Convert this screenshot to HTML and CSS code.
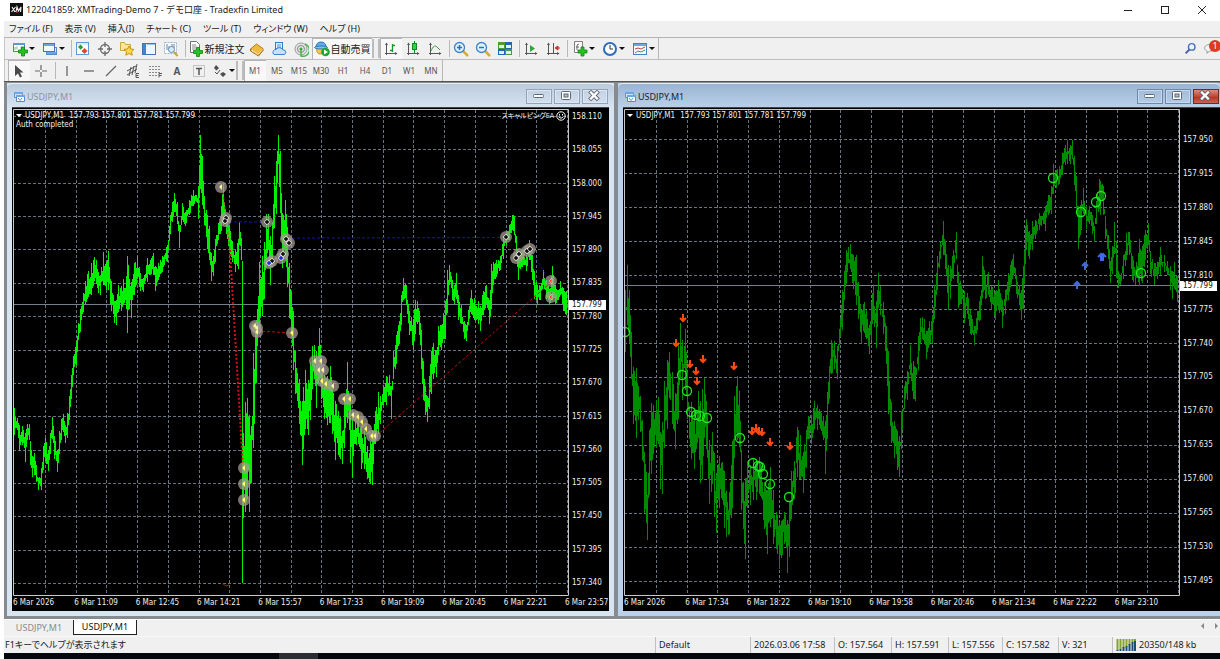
FILE: index.html
```html
<!DOCTYPE html>
<html lang="ja">
<head>
<meta charset="utf-8">
<title>122041859: XMTrading-Demo 7 - デモ口座 - Tradexfin Limited</title>
<link rel="stylesheet" href="styles.css">
</head>
<body>
<svg class="defs" aria-hidden="true">
  <defs>
    <symbol id="plus" viewBox="0 0 9 9"><path d="M3 .5h3v2.500h2.500v3H6v2.500H3V6H.5V3H3z" fill="#2cc92c" stroke="#148a14"/></symbol>
    <symbol id="i-newchart" viewBox="0 0 16 16"><rect x="1.500" y="2.500" width="11" height="8" fill="#fff" stroke="#4a83c4"/><path d="M1 2h12v2H1z" fill="#5b98d8"/><path d="M3 6v3M5 5.500v3M9 5.500v3" stroke="#8aa"/><path d="M9.500 6h3v3h3v3h-3v3h-3v-3h-3V9h3z" fill="#22c322" stroke="#128412" stroke-width=".8"/></symbol>
    <symbol id="i-profiles" viewBox="0 0 16 16"><rect x="4.500" y="6.500" width="10" height="7" fill="#dbe9f8" stroke="#5b8ac0"/><rect x="1.500" y="2.500" width="11" height="8" fill="#f2f8ff" stroke="#3f78bd"/><path d="M2 3h10v2H2zM5 11h9v2H5z" fill="#6fa5dd"/></symbol>
    <symbol id="i-market" viewBox="0 0 16 16"><rect x="1.500" y="1.500" width="12" height="12" fill="#fff" stroke="#5e9bd8"/><path d="M2 3h11" stroke="#b9d8f4"/><path d="m5.500 3.500 2.700 2.700-2.500 2.500L3 6z" fill="#2a9a34"/><path d="m9.500 7 3 3-3 3-3-3z" fill="#dd4b2c"/></symbol>
    <symbol id="i-cross" viewBox="0 0 16 16"><circle cx="8" cy="8" r="4.500" fill="none" stroke="#6b6b6b" stroke-width="1.300"/><path d="M8 1v5M8 10v5M1 8h5M10 8h5" stroke="#6b6b6b" stroke-width="1.300"/></symbol>
    <symbol id="i-folder" viewBox="0 0 16 16"><path d="M1.500 9.500v-8h4l1 2h5v6z" fill="#ffe594" stroke="#c9a544"/><path d="m10 5 1.500 3 3.500.4-2.500 2.300.7 3.500-3.200-1.700-3.200 1.700.7-3.500L5 8.400 8.500 8z" fill="#ffdb42" stroke="#c99013"/></symbol>
    <symbol id="i-panel" viewBox="0 0 16 16"><rect x="1.500" y="2.500" width="13" height="11" fill="#eef7ff" stroke="#3d77b5"/><path d="M2 3h3v10H2z" fill="#3f87cc"/><path d="M6 3.500h8" stroke="#9ac4ea"/></symbol>
    <symbol id="i-tester" viewBox="0 0 16 16"><rect x="1.500" y="1.500" width="12" height="11" fill="#f8fbff" stroke="#9ab5ce" stroke-dasharray="2 1"/><path d="M4 3v6M6 5v5M9 3v4M11 3v4" stroke="#6688a8"/><circle cx="8.500" cy="8.500" r="3" fill="#d4ecff" stroke="#6689aa"/><path d="m11 11 3.500 4" stroke="#d1a22e" stroke-width="2"/></symbol>
    <symbol id="i-order" viewBox="0 0 16 16"><path d="M2.500.5h6l3 3v8h-9z" fill="#fff" stroke="#707070"/><path d="M4 4h4M4 6h5M4 8h4" stroke="#888"/><path d="M8.500 6.500h3v3h3v3h-3v3h-3v-3h-3v-3h3z" fill="#22c322" stroke="#128412" stroke-width=".8"/></symbol>
    <symbol id="i-book" viewBox="0 0 16 16"><path d="m1.500 8 6-5 7 5-5 6z" fill="#f0b93f" stroke="#b9791d"/><path d="m3 9 6 4.500 5-5" fill="none" stroke="#fff2c8"/><path d="m1.500 8v2l8 5 5-6" fill="none" stroke="#a9690f"/></symbol>
    <symbol id="i-cloud" viewBox="0 0 16 16"><rect x="4.500" y="1.500" width="7" height="6" fill="#dff1ff" stroke="#2e7fd1"/><path d="M6 4h4M6 6h4" stroke="#3f96e6"/><path d="M3 13.500h10a2.300 2.300 0 0 0 0-4.500h-1a4 4 0 0 0-7-.5C2 8 1 12.500 3 13.500z" fill="#c6e1fa" stroke="#3c82cd"/></symbol>
    <symbol id="i-signal" viewBox="0 0 16 16"><circle cx="8" cy="8" r="6" fill="#e4e4e4" stroke="#9a9a9a"/><circle cx="8" cy="8" r="3.500" fill="none" stroke="#888"/><path d="M8 8v7a6 6 0 0 0 4-12" fill="none" stroke="#4db54f" stroke-width="1.500"/><circle cx="8" cy="8" r="1.500" fill="#38a83c"/></symbol>
    <symbol id="i-auto" viewBox="0 0 16 16"><path d="M3 6h8c0 3-2 7-5 7S2 9 3 6z" fill="#f3c94a" stroke="#b7902b"/><path d="M2 6c0-3 2-5 5-5s5 2 5 5z" fill="#5eaee8" stroke="#2f77b5"/><ellipse cx="7" cy="6.500" rx="6.500" ry="1.500" fill="#7cc3f2" stroke="#2f77b5"/><circle cx="11.500" cy="11" r="4.300" fill="#1da53a"/><path d="m10 8.500 4 2.500-4 2.500z" fill="#fff"/></symbol>
    <symbol id="axes" viewBox="0 0 16 16"><path d="M3.500 3v11M2 12.500h12" stroke="#555" fill="none"/><path d="M3.500 1.500 5 4H2zM14.500 12.500 12 11v3z" fill="#555"/></symbol>
    <symbol id="i-bars" viewBox="0 0 16 16"><use href="#axes" width="16" height="16"/><path d="M9.500 3v8M7 9.500h2.500M9.500 4.500H12" stroke="#169a25" stroke-width="1.300"/></symbol>
    <symbol id="i-candle" viewBox="0 0 16 16"><use href="#axes" width="16" height="16"/><path d="M9.500 0v12" stroke="#128a20"/><rect x="7.500" y="2.500" width="4" height="6" fill="#2fd43f" stroke="#128a20"/></symbol>
    <symbol id="i-line" viewBox="0 0 16 16"><use href="#axes" width="16" height="16"/><path d="M4 10c2-5 4-6 6-4l3 3" fill="none" stroke="#3f9a47"/></symbol>
    <symbol id="i-zoomin" viewBox="0 0 16 16"><path d="m10 10 5 5" stroke="#d9ad35" stroke-width="2.500"/><circle cx="6.500" cy="6.500" r="5" fill="#dff1ff" stroke="#3c84cc" stroke-width="1.300"/><path d="M4 6.500h5M6.500 4v5" stroke="#2e6db8" stroke-width="1.500"/></symbol>
    <symbol id="i-zoomout" viewBox="0 0 16 16"><path d="m10 10 5 5" stroke="#d9ad35" stroke-width="2.500"/><circle cx="6.500" cy="6.500" r="5" fill="#dff1ff" stroke="#3c84cc" stroke-width="1.300"/><path d="M4 6.500h5" stroke="#2e6db8" stroke-width="1.500"/></symbol>
    <symbol id="i-tile" viewBox="0 0 16 16"><path d="M1 1h7v7H1z" fill="#4d9b32"/><path d="M8 1h7v7H8z" fill="#2463b5"/><path d="M1 8h7v6H1z" fill="#2463b5"/><path d="M8 8h7v6H8z" fill="#4d9b32"/><path d="M2 4h5v3H2zM9 4h5v3H9zM2 10h5v3H2zM9 10h5v3H9z" fill="#e4f1ea"/></symbol>
    <symbol id="i-scroll" viewBox="0 0 16 16"><use href="#axes" width="16" height="16"/><path d="m7 4 5 3.500L7 11z" fill="#2aa83a"/></symbol>
    <symbol id="i-shift" viewBox="0 0 16 16"><use href="#axes" width="16" height="16"/><path d="M8.500 2v10" stroke="#555"/><path d="M15 7h-3M13 5l-3 2 3 2z" stroke="#c9352b" fill="#c9352b"/></symbol>
    <symbol id="i-indic" viewBox="0 0 16 16"><path d="M2.500.5h8v11h-8z" fill="#fff" stroke="#808080"/><path d="M5 9V5q0-2 2-2M4 6h3" fill="none" stroke="#666"/><path d="M9 6h3v3h3v3h-3v3H9v-3H6V9h3z" fill="#22c322" stroke="#128412" stroke-width=".8"/></symbol>
    <symbol id="i-clock" viewBox="0 0 16 16"><circle cx="8" cy="8" r="6" fill="#fff" stroke="#2b6dbd" stroke-width="2"/><path d="M8 4v4h3" fill="none" stroke="#333"/></symbol>
    <symbol id="i-template" viewBox="0 0 16 16"><rect x="1.500" y="2.500" width="13" height="11" fill="#f7fbff" stroke="#4683bd"/><path d="M2 3h12v2H2z" fill="#72a8d8"/><path d="m3 8 3-1 3 1 4-2" fill="none" stroke="#bb4837"/><path d="m3 12 3-2 3 1 4-2" fill="none" stroke="#3c9a4a"/></symbol>
    <symbol id="i-cursor" viewBox="0 0 16 16"><path d="M4 2v11l3-2.500 2 4 2-1-2-4h3.500z" fill="#4a4a4a"/></symbol>
    <symbol id="i-hair" viewBox="0 0 16 16"><path d="M8 2v5M8 9v5M2 8h5M9 8h5" stroke="#666" stroke-width="1.200"/></symbol>
    <symbol id="i-vline" viewBox="0 0 16 16"><path d="M8 3v10" stroke="#666" stroke-width="1.300"/></symbol>
    <symbol id="i-hline" viewBox="0 0 16 16"><path d="M3 8h10" stroke="#666" stroke-width="1.300"/></symbol>
    <symbol id="i-trend" viewBox="0 0 16 16"><path d="M3 13 13 3" stroke="#666" stroke-width="1.300"/></symbol>
    <symbol id="i-channel" viewBox="0 0 16 16"><path d="m2 8 9-5M2 12l10-6M4 13l2-9M7 12l2-9M10 10l2-9" stroke="#555"/><path d="M14 10.500h-3v4h3M11 12.500h2.500" fill="none" stroke="#555"/></symbol>
    <symbol id="i-fibo" viewBox="0 0 16 16"><path d="M2 3.500h12M2 6.500h12M2 9.500h12M2 12.500h8" stroke="#888" stroke-dasharray="2 1"/><path d="M15 10.500h-3v4M12 12.500h2.500" fill="none" stroke="#555"/></symbol>
    <symbol id="i-label" viewBox="0 0 16 16"><rect x="2.500" y="2.500" width="11" height="11" fill="none" stroke="#999" stroke-dasharray="1 1"/><path d="M5 5.500h6M8 5v7" stroke="#555" stroke-width="1.500"/></symbol>
    <symbol id="i-arrows" viewBox="0 0 16 16"><path d="m4 2 3 3-2.500 2.500L2 5zM11 9l3 2-3 3-3-3z" fill="#4d4d4d"/><path d="m3 9 2 2 3-4" fill="none" stroke="#4d4d4d"/></symbol>
    <symbol id="i-win" viewBox="0 0 12 12"><path d="M1.500 1.500h8v5h-8z" fill="#cfe4fb" stroke="#5a95d6"/><path d="M1 1h9v2H1z" fill="#6aa6e8"/><path d="M3.500 4.500h8v6h-8z" fill="#fff" stroke="#4e8bd0"/><path d="M3 4h9v2H3z" fill="#6aa6e8"/><path d="m5 7 2 2.500L9 7" fill="none" stroke="#5a95d6"/></symbol>
    <symbol id="w-min" viewBox="0 0 26 15"><rect x="7.500" y="5.500" width="10" height="3" rx="1" fill="#fff" stroke="#5d6877"/></symbol>
    <symbol id="w-max" viewBox="0 0 26 15"><rect x="7.500" y="2.500" width="9" height="8" rx="1" fill="#fff" stroke="#5d6877"/><rect x="10" y="5" width="4" height="3" fill="#a9bdd6" stroke="#5d6877"/></symbol>
    <symbol id="w-close" viewBox="0 0 26 15"><path d="m9 3.500 6 6M15 3.500l-6 6" stroke="#5d6070" stroke-width="4" stroke-linecap="square"/><path d="m9 3.500 6 6M15 3.500l-6 6" stroke="#fff" stroke-width="2.400" stroke-linecap="square"/></symbol>
  </defs>
</svg>

<header class="titlebar">
  <svg class="logo" viewBox="0 0 13 13" aria-hidden="true"><path d="M0 0h13v13H0z" fill="#111"/><path d="m2 4 3 5M5.500 4 1.500 9M6 9l1-5 1.500 4L11 4l-.5 5" fill="none" stroke="#eee" stroke-width="1.200"/><path d="M6 9h2" stroke="#d33"/></svg>
  <h1>122041859: XMTrading-Demo 7 - デモ口座 - Tradexfin Limited</h1>
  <div class="sysbuttons">
    <button aria-label="最小化"><svg viewBox="0 0 10 10"><path d="M1 5.500h8" stroke="#222"/></svg></button>
    <button aria-label="最大化"><svg viewBox="0 0 10 10"><rect x="1.500" y="1.500" width="7" height="7" fill="none" stroke="#222"/></svg></button>
    <button aria-label="閉じる"><svg viewBox="0 0 10 10"><path d="m1 1 8 8M9 1 1 9" stroke="#222"/></svg></button>
  </div>
</header>

<div class="app">
  <nav class="menu">
    <button>ファイル (F)</button><button>表示 (V)</button><button>挿入(I)</button><button>チャート (C)</button><button>ツール (T)</button><button>ウィンドウ (W)</button><button>ヘルプ (H)</button>
  </nav>

  <div class="toolrow">
    <div class="toolbar">
      <button class="drop" aria-label="新規チャート"><svg><use href="#i-newchart"/></svg></button>
      <button class="drop" aria-label="プロファイル"><svg><use href="#i-profiles"/></svg></button>
      <i class="sep"></i>
      <button aria-label="気配値"><svg><use href="#i-market"/></svg></button>
      <button aria-label="データウィンドウ"><svg><use href="#i-cross"/></svg></button>
      <button aria-label="ナビゲーター"><svg><use href="#i-folder"/></svg></button>
      <button aria-label="ターミナル"><svg><use href="#i-panel"/></svg></button>
      <button aria-label="ストラテジーテスター"><svg><use href="#i-tester"/></svg></button>
      <i class="sep"></i>
      <button class="wide"><svg><use href="#i-order"/></svg>新規注文</button>
      <button aria-label="エディター"><svg><use href="#i-book"/></svg></button>
      <button aria-label="サーバー"><svg><use href="#i-cloud"/></svg></button>
      <button aria-label="シグナル"><svg><use href="#i-signal"/></svg></button>
      <button class="wide on"><svg><use href="#i-auto"/></svg>自動売買</button>
      <i class="grip"></i>
      <button class="on" aria-label="バーチャート"><svg><use href="#i-bars"/></svg></button>
      <button aria-label="ローソク足"><svg><use href="#i-candle"/></svg></button>
      <button aria-label="ライン"><svg><use href="#i-line"/></svg></button>
      <i class="sep"></i>
      <button aria-label="拡大"><svg><use href="#i-zoomin"/></svg></button>
      <button aria-label="縮小"><svg><use href="#i-zoomout"/></svg></button>
      <button aria-label="整列"><svg><use href="#i-tile"/></svg></button>
      <i class="sep"></i>
      <button aria-label="自動スクロール"><svg><use href="#i-scroll"/></svg></button>
      <button aria-label="シフト"><svg><use href="#i-shift"/></svg></button>
      <i class="sep"></i>
      <button class="drop" aria-label="インディケータ"><svg><use href="#i-indic"/></svg></button>
      <button class="drop" aria-label="時間軸"><svg><use href="#i-clock"/></svg></button>
      <button class="drop" aria-label="定型チャート"><svg><use href="#i-template"/></svg></button>
    </div>
    <div class="right-tools">
      <button aria-label="検索"><svg viewBox="0 0 16 16"><path d="m7 9-5 5" stroke="#4a64a8" stroke-width="2.500"/><circle cx="9.500" cy="6" r="4" fill="#eef4ff" stroke="#4a6fc0" stroke-width="1.800"/></svg></button>
      <button class="chat" aria-label="通知"><svg viewBox="0 0 16 16"><path d="M3 5c3-3 9-2 10 1s-1 6-5 5l-3 3v-3C2 10 1 7 3 5z" fill="#f4f4f4" stroke="#888"/></svg><span>1</span></button>
    </div>
  </div>

  <div class="toolrow second">
    <div class="toolbar">
      <button class="on" aria-label="カーソル"><svg><use href="#i-cursor"/></svg></button>
      <button aria-label="クロスヘア"><svg><use href="#i-hair"/></svg></button>
      <i class="sep"></i>
      <button aria-label="垂直線"><svg><use href="#i-vline"/></svg></button>
      <button aria-label="水平線"><svg><use href="#i-hline"/></svg></button>
      <button aria-label="トレンドライン"><svg><use href="#i-trend"/></svg></button>
      <button aria-label="チャネル"><svg><use href="#i-channel"/></svg></button>
      <button aria-label="フィボナッチ"><svg><use href="#i-fibo"/></svg></button>
      <button class="letter">A</button>
      <button aria-label="ラベル"><svg><use href="#i-label"/></svg></button>
      <button class="drop narrow" aria-label="矢印"><svg><use href="#i-arrows"/></svg></button>
      <i class="grip"></i>
      <button class="tf on">M1</button><button class="tf">M5</button><button class="tf">M15</button><button class="tf">M30</button><button class="tf">H1</button><button class="tf">H4</button><button class="tf">D1</button><button class="tf">W1</button><button class="tf">MN</button>
    </div>
  </div>

  <main class="workspace">
    <section class="window">
      <div class="caption">
        <svg class="winicon"><use href="#i-win"/></svg><h2>USDJPY,M1</h2>
        <button aria-label="最小化"><svg><use href="#w-min"/></svg></button><button aria-label="最大化"><svg><use href="#w-max"/></svg></button><button aria-label="閉じる"><svg><use href="#w-close"/></svg></button>
      </div>
      <div class="chart">
        <div class="plot">
          <svg id="chart-a" viewBox="12 108 557 488" preserveAspectRatio="none" role="img" aria-label="USDJPY M1"></svg>
          <div class="legend"><p class="quote"><span>USDJPY,M1</span> 157.793 157.801 157.781 157.799</p><p>Auth completed</p></div>
          <div class="expert">スキャルピングEA <svg viewBox="0 0 10 10"><circle cx="5" cy="5" r="4.200" fill="none" stroke="#fff"/><path d="M3.500 3v1.500M6.500 3v1.500M2.800 6q2.200 2.500 4.400 0" fill="none" stroke="#fff"/></svg></div>
        </div>
        <div class="prices prices-a">
          <span>158.110</span><span>158.055</span><span>158.000</span><span>157.945</span><span>157.890</span><span>157.835</span><span>157.780</span><span>157.725</span><span>157.670</span><span>157.615</span><span>157.560</span><span>157.505</span><span>157.450</span><span>157.395</span><span>157.340</span>
          <b>157.799</b>
        </div>
        <div class="times"><span>6 Mar 2026</span><span>6 Mar 11:09</span><span>6 Mar 12:45</span><span>6 Mar 14:21</span><span>6 Mar 15:57</span><span>6 Mar 17:33</span><span>6 Mar 19:09</span><span>6 Mar 20:45</span><span>6 Mar 22:21</span><span>6 Mar 23:57</span></div>
      </div>
    </section>

    <section class="window active">
      <div class="caption">
        <svg class="winicon"><use href="#i-win"/></svg><h2>USDJPY,M1</h2>
        <button aria-label="最小化"><svg><use href="#w-min"/></svg></button><button aria-label="最大化"><svg><use href="#w-max"/></svg></button><button class="close" aria-label="閉じる"><svg><use href="#w-close"/></svg></button>
      </div>
      <div class="chart">
        <div class="plot">
          <svg id="chart-b" viewBox="623 108 557 488" preserveAspectRatio="none" role="img" aria-label="USDJPY M1"></svg>
          <div class="legend"><p class="quote"><span>USDJPY,M1</span> 157.793 157.801 157.781 157.799</p></div>
        </div>
        <div class="prices prices-b">
          <span>157.950</span><span>157.915</span><span>157.880</span><span>157.845</span><span>157.810</span><span>157.775</span><span>157.740</span><span>157.705</span><span>157.670</span><span>157.635</span><span>157.600</span><span>157.565</span><span>157.530</span><span>157.495</span>
          <b>157.799</b>
        </div>
        <div class="times"><span>6 Mar 2026</span><span>6 Mar 17:34</span><span>6 Mar 18:22</span><span>6 Mar 19:10</span><span>6 Mar 19:58</span><span>6 Mar 20:46</span><span>6 Mar 21:34</span><span>6 Mar 22:22</span><span>6 Mar 23:10</span></div>
      </div>
    </section>
  </main>

  <div class="tabs">
    <button>USDJPY,M1</button><button class="current">USDJPY,M1</button>
    <span class="scroll"><button aria-label="左へ"><svg viewBox="0 0 6 8"><path d="m5 1-3 3 3 3z" fill="#888"/></svg></button><button aria-label="右へ"><svg viewBox="0 0 6 8"><path d="m1 1 3 3-3 3z" fill="#888"/></svg></button></span>
  </div>

  <footer class="status">
    <span class="hint">F1キーでヘルプが表示されます</span>
    <span class="c-profile">Default</span><span class="c-date">2026.03.06 17:58</span><span class="c-ohl">O: 157.564</span><span class="c-ohl">H: 157.591</span><span class="c-l">L: 157.556</span><span class="c-c">C: 157.582</span><span class="c-v">V: 321</span>
    <span class="c-net"><svg viewBox="0 0 20 12"><path d="M1.500 0v11M4.500 0v10M7.500 0v9M10.500 0v8M13.500 0v6M16.500 0v4M19 0v3" stroke="#84a32c" stroke-width="2"/><path d="M1.500 11v1M4.500 10v2M7.500 8v4M10.500 7v5M13.500 5v7M16.500 3v9M19 2v10" stroke="#194f7c" stroke-width="2"/></svg>20350/148 kb</span>
  </footer>
</div>
<div class="taskbar"><i></i></div>
<script src="chart.js"></script>
</body>
</html>
```
FILE: styles.css
```css
* { box-sizing: border-box; }
body { margin: 0; min-height: 100vh; display: flex; flex-direction: column; background: #fff; color: #1a1a1a; font: 9px/12px "Noto Sans", "Noto Sans CJK JP", sans-serif; }
h1, h2, p { margin: 0; font: inherit; }
button { font: inherit; color: inherit; border: 0; padding: 0; background: none; display: flex; align-items: center; justify-content: center; }
svg { display: block; flex: none; }
.defs { position: absolute; width: 0; height: 0; }

.titlebar { height: 21px; display: flex; align-items: center; gap: 3px; padding: 0 0 2px 10px; }
.titlebar h1 { flex: 1; }
.logo { width: 13px; height: 13px; }
.sysbuttons { display: flex; }
.sysbuttons button { width: 37px; height: 18px; }
.sysbuttons svg { width: 10px; height: 10px; }

.app { flex: 1; margin-left: 4px; background: #f0f0f0; display: flex; flex-direction: column; }
.menu { height: 17px; display: flex; gap: 12px; padding-left: 5px; border-bottom: 1px solid #b4b4b4; font-feature-settings: "palt"; }

.toolrow { display: flex; justify-content: space-between; height: 22px; border-bottom: 1px solid #bdbdbd; }
.toolrow.second { height: 21px; border-bottom: 0; }
.toolbar { display: flex; padding-left: 3px; border-left: 1px solid #c8c8c8; border-right: 1px solid #b8b8b8; }
.toolbar button { width: 22px; }
.toolbar svg { width: 16px; height: 16px; }
.toolbar .drop { width: 30px; gap: 1px; }
.toolbar .drop.narrow { width: 26px; }
.drop::after { content: ""; border: 3px solid transparent; border-top-color: #111; border-bottom: 0; }
.toolbar .wide { width: 60px; gap: 1px; font-size: 10px; white-space: nowrap; }
.toolbar .on { background: #f8f8f8; box-shadow: inset 1px 1px #b5b5b5; }
.sep { width: 4px; border-right: 1px solid #b8b8b8; margin: 2px 0; }
.grip { width: 8px; border: solid #bcbcbc; border-width: 0 2px; margin: 1px 0; }
.tf { font-size: 8px; color: #555; }
.letter { font-weight: bold; color: #555; font-size: 10px; }
.right-tools { display: flex; align-items: center; gap: 6px; overflow: hidden; }
.right-tools svg { width: 13px; height: 13px; }
.chat { position: relative; width: 17px; height: 18px; justify-content: flex-start; }
.chat span { position: absolute; top: 0; left: 6px; width: 12px; height: 12px; border-radius: 6px; background: #dc3a22; color: #fff; text-align: center; }

.workspace { flex: 1; display: flex; gap: 4px; padding: 1px 0 3px 3px; background: #858b8e; border-top: 1px solid #555; }
.window { box-sizing: content-box; flex: 1 1 0; min-width: 0; display: flex; flex-direction: column; padding: 0 5px 5px; background: #d7e4f2; color: #8c949c; }
.window.active { padding-right: 0; background: #b9d1ea; color: #1b222b; }
.caption { height: 25px; margin: 0 -5px; padding: 1px 6px 0; display: flex; align-items: center; gap: 2px; background: linear-gradient(#bccbdc, #d7e4f2); border-top: 1px solid #e8eef5; border-radius: 5px 5px 0 0; }
.active .caption { margin-right: 0; padding-right: 1px; background: linear-gradient(#9bb4d3, #b9d1ea); }
.caption h2 { flex: 1; }
.winicon { width: 12px; height: 12px; }
.caption button { width: 26px; height: 15px; border: 1px solid #93a2b5; box-shadow: inset 0 0 0 1px #dce7f3; }
.active .caption button { border-color: #6f86a5; box-shadow: inset 0 0 0 1px #c5d8ee; }
.caption button svg { width: 26px; height: 15px; }
.active .caption .close { background: linear-gradient(#dc8c80, #c24433 50%, #b3311f 51%, #cf6350); border-color: #6b2b28; box-shadow: none; }

.chart { flex: 1; display: grid; grid-template: 1fr 15px / 1fr 40px; background: #000; color: #f0f0f0; font: 8px/10px "DejaVu Sans Condensed", "Noto Sans", "Noto Sans CJK JP", sans-serif; border-top: 1px solid #444; margin-top: -1px; }
.plot { position: relative; min-width: 0; }
.plot > svg { position: absolute; inset: 0; width: 100%; height: 100%; }
.legend { position: absolute; left: 4px; top: 3px; }
.legend p { line-height: 9px; }
.quote { display: flex; align-items: center; gap: 3px; }
.quote span { padding-right: 2px; }
.quote::before { content: ""; border: 3px solid transparent; border-top-color: #fff; border-bottom: 0; }
.expert { position: absolute; right: 3px; top: 3px; display: flex; align-items: center; gap: 2px; font-size: 7px; font-feature-settings: "palt"; }
.expert svg { width: 10px; height: 10px; }
.prices { position: relative; display: flex; flex-direction: column; justify-content: space-between; padding-left: 3px; }
.prices-a { padding-top: 4px; padding-bottom: 8px; }
.prices-b { padding-top: 27px; padding-bottom: 10px; }
.prices b { position: absolute; left: 0; width: 37px; padding-left: 3px; background: #fff; color: #111; font-weight: normal; }
.prices-a b { top: calc(39% + 2px); }
.prices-b b { top: calc(35% + 2px); }
.times { grid-column: 1 / -1; display: grid; grid-template-columns: repeat(9, 1fr) 44px; padding: 2px 0 0 1px; white-space: nowrap; }

.tabs { height: 17px; display: flex; align-items: flex-start; padding-left: 1px; color: #8a8a8a; border-top: 1px solid #fff; }
.tabs > button { height: 15px; width: 68px; }
.tabs .current { width: 64px; border: 1px solid #222; border-top: 0; background: #fff; color: #111; }
.scroll { margin-left: auto; display: flex; gap: 9px; padding-top: 2px; }
.scroll svg { width: 6px; height: 8px; }

.status { height: 17px; display: flex; white-space: nowrap; border-top: 1px solid #f8f8f8; }
.status span { padding: 2px 3px 0; border-left: 1px solid #c0c0c0; }
.status .hint { flex: 1; border: 0; padding-left: 1px; font-feature-settings: "palt"; }
.c-profile { width: 95px; }
.c-date { width: 84px; }
.c-ohl { width: 57px; }
.c-l { width: 54px; }
.c-c { width: 56px; }
.c-v { width: 54px; }
.status .c-net { width: 108px; display: flex; gap: 3px; }
.c-net svg { width: 20px; height: 12px; }

.taskbar { height: 6px; margin-left: 4px; background: #05070f; display: flex; }
.taskbar i { width: 39px; margin-left: 275px; background: #2c2d33; }

.grid { stroke: #68737e; stroke-dasharray: 3 2; fill: none; }
.frame { stroke: #c8c8c8; fill: none; }
.bid { stroke: #76808c; }
.bars { fill: none; shape-rendering: crispEdges; }
.bars-a { stroke: #00f000; }
.bars-b { stroke: #008c00; }
.halo { fill: #a39a90; fill-opacity: .75; }
.ring { fill: none; stroke: #1fe61f; stroke-width: 1.300; }
```
FILE: chart.js
```js
// Price envelopes: x, high, low for each key point of the series.
const seriesA = `14,408,435 17,418,430 19,425,452 22,425,445 25,432,462 27,424,440 29,424,440 30,440,465 32,455,478 34,452,476 36,465,482 38,478,490 41,468,491 43,445,470 45,437,462 48,450,471 50,432,455 52,416,440 54,435,460 57,450,472 59,430,455 61,418,440 63,414,432 65,425,444 67,412,438 69,395,420 71,375,400 73,355,375 76,340,365 78,322,340 80,308,332 83,292,312 85,280,305 88,270,298 91,262,296 94,256,282 96,260,284 98,272,293 100,275,295 103,251,285 106,262,290 108,250,290 111,280,312 114,300,324 116,300,326 118,285,312 121,285,312 123,278,305 126,275,310 127,255,334 128,265,310 131,280,318 134,262,295 137,255,280 140,272,292 143,278,292 147,258,282 150,260,275 153,252,275 155,265,292 158,262,280 162,256,272 167,245,262 170,215,235 172,202,222 174,192,212 177,202,225 179,225,248 182,202,220 185,212,226 189,200,216 193,190,206 196,195,202 198,185,220 200,135,190 202,155,205 204,195,225 207,215,250 209,225,260 211,252,282 213,255,276 215,238,262 218,222,240 221,205,232 223,182,225 226,215,235 229,225,252 232,240,262 235,250,272 238,238,270 239,222,246 241,238,260 242,260,410 243,430,518 245,400,512 247,395,500 249,415,516 251,425,485 253,350,450 256,320,385 259,260,335 262,255,318 264,240,300 266,213,270 268,213,250 270,235,285 272,222,260 274,175,230 276,160,215 278,134,165 280,150,215 282,210,270 285,198,255 287,225,290 289,262,320 291,290,335 293,310,370 295,350,395 297,372,402 299,378,425 302,400,466 303,385,450 305,370,430 308,380,435 310,360,420 312,345,390 314,345,380 316,350,410 319,326,380 321,360,400 324,375,420 327,375,425 330,365,425 332,385,435 335,400,460 338,410,455 340,415,460 342,430,465 344,400,450 347,360,425 350,395,465 352,415,478 355,415,445 358,420,445 361,425,470 364,430,470 367,445,480 370,440,485 372,430,485 375,410,445 378,392,435 380,395,425 383,385,405 386,375,405 389,375,395 391,385,420 393,350,380 396,335,365 399,320,345 401,295,325 403,278,300 406,285,305 409,310,335 413,318,350 415,300,335 417,300,325 419,310,335 421,330,370 423,360,400 425,385,415 427,395,423 429,375,410 431,350,395 433,343,380 436,350,378 438,325,355 441,325,350 445,300,340 447,270,315 449,265,285 452,280,300 454,285,305 456,272,300 458,295,320 461,305,325 464,320,340 466,325,341 468,310,325 471,290,315 474,298,320 478,300,325 480,305,331 483,290,315 486,284,305 489,300,325 491,262,310 493,262,285 496,260,278 500,255,270 503,235,260 506,232,245 509,225,240 512,215,230 514,215,235 516,235,262 518,250,280 520,250,270 523,250,265 526,255,272 529,240,260 532,255,280 534,270,300 537,285,305 540,285,300 543,270,285 546,280,300 549,288,305 552,265,300 555,285,305 558,290,300 560,280,295 563,288,312 566,290,315`;
const seriesB = `625,290,355 627,263,325 629,290,345 631,330,380 633,365,425 636,365,440 638,385,420 640,395,432 642,420,460 644,450,515 646,470,525 647,495,542 649,430,495 651,400,475 653,405,455 656,400,450 658,395,445 660,430,490 662,420,495 664,380,450 667,360,430 669,350,400 672,370,425 675,390,450 678,340,420 680,322,380 682,340,400 685,328,390 687,370,420 689,405,440 691,400,460 694,410,470 696,420,450 698,390,440 700,400,485 702,385,480 704,378,440 706,400,450 709,440,505 712,430,485 714,450,520 716,470,535 719,455,510 722,460,500 724,470,530 726,490,538 729,490,535 732,440,510 734,395,460 737,375,440 739,390,450 741,450,510 743,480,530 745,475,560 747,460,510 750,465,505 753,458,500 756,460,500 759,455,495 761,465,500 764,480,530 767,490,555 770,465,530 773,490,545 776,510,550 779,520,570 781,520,560 784,510,545 787,520,575 789,500,560 791,470,520 794,460,500 797,425,480 800,435,480 803,450,495 806,430,470 808,415,440 811,415,445 814,400,430 817,405,430 820,410,430 823,415,440 825,420,475 827,390,440 829,365,400 831,340,375 834,340,370 837,345,380 839,328,345 842,290,330 844,270,300 846,250,285 850,243,270 853,255,290 856,255,305 858,280,320 861,310,345 864,300,335 866,310,340 869,325,355 871,300,340 873,285,320 876,300,350 878,272,310 880,285,315 883,300,335 886,325,365 888,350,415 891,400,445 894,420,460 897,430,470 899,435,477 901,410,450 904,385,410 907,370,400 910,345,375 913,360,400 915,365,402 918,335,370 920,318,345 922,316,340 924,318,345 926,330,360 929,320,345 932,315,345 934,285,320 937,255,290 940,240,260 943,220,255 945,240,270 948,265,310 950,265,300 953,250,280 956,232,260 958,270,310 961,285,305 964,290,325 967,292,315 970,310,335 974,325,345 977,310,330 980,295,320 982,256,300 985,275,300 988,272,295 991,285,310 995,290,320 998,280,310 1002,300,328 1005,290,315 1008,272,300 1011,260,285 1013,253,275 1016,275,295 1019,285,305 1021,290,320 1023,265,310 1025,225,265 1026,218,250 1029,230,260 1032,220,250 1035,220,240 1039,212,230 1043,213,225 1045,205,232 1048,195,215 1051,185,215 1053,163,195 1056,170,188 1059,165,185 1062,152,175 1065,145,165 1067,139,165 1070,145,165 1072,139,160 1074,155,185 1076,175,210 1078,205,250 1081,200,230 1083,187,215 1086,205,230 1089,205,225 1092,215,235 1094,225,243 1096,200,225 1099,178,210 1100,180,215 1103,185,215 1105,215,240 1108,235,260 1110,260,283 1112,245,275 1114,222,255 1116,240,280 1118,270,288 1120,275,285 1123,255,280 1126,232,260 1129,232,255 1132,255,280 1135,270,285 1139,238,287 1142,245,285 1145,230,260 1148,223,245 1150,250,275 1154,262,285 1157,262,280 1160,247,275 1164,255,272 1167,260,275 1170,265,290 1172,270,300 1174,262,290 1177,275,302`;

const parse = text => text.split(' ').map(p => p.split(',').map(Number));

function noise(seed) {
  let s = seed;
  return () => (s = (s * 16807) % 2147483647) / 2147483647;
}

function bars(text, seed, trim) {
  const keys = parse(text), rnd = noise(seed);
  let d = '', k = 0;
  const last = keys[keys.length - 1][0];
  for (let x = keys[0][0]; x <= last; x++) {
    while (keys[k + 1] && keys[k + 1][0] <= x) k++;
    const a = keys[k], b = keys[k + 1] || a;
    const t = b === a ? 0 : (x - a[0]) / (b[0] - a[0]);
    const hi = a[1] + (b[1] - a[1]) * t, lo = a[2] + (b[2] - a[2]) * t;
    const span = lo - hi, exact = t === 0 ? 0.1 : 1;
    const y1 = hi + rnd() * trim * span * exact, y2 = lo - rnd() * trim * span * exact;
    d += `M${x + 0.5} ${Math.round(y1)}V${Math.round(y2)}`;
  }
  return d;
}

function grid(xs, y0, dy, rows, x1, x2) {
  let d = '';
  for (let i = 0; i < 18; i++) d += `M${Math.round(xs + i * 30.7) + 0.5} 110V595`;
  for (let i = 0; i < rows; i++) d += `M${x1} ${Math.round(y0 + i * dy) + 0.5}H${x2}`;
  return `<path class="grid" d="${d}"/>`;
}

function frame(x1, x2, y0, dy, rows) {
  let d = `M${x1 + 0.5} 109.5H${x2 + 0.5}V595.5H${x1 + 0.5}Z`;
  for (let i = 0; i < rows; i++) d += `M${x2} ${Math.round(y0 + i * dy) + 0.5}h3`;
  return `<path class="frame" d="${d}"/>`;
}

const line = (x1, y1, x2, y2, color, w = 1, dash = '3 2') =>
  `<path d="M${x1} ${y1}L${x2} ${y2}" stroke="${color}" stroke-width="${w}" stroke-dasharray="${dash}"/>`;

// Trade markers: x, y, colour kind.
const trades = [
  [221, 187, 'y'], [226, 218, 'w'], [225, 221, 'w'], [267, 222, 'w'], [286, 239, 'w'], [289, 243, 'w'],
  [272, 261, 'w'], [269, 263, 'b'], [283, 254, 'w'], [281, 258, 'b'], [255, 326, 'y'], [257, 328, 'y'], [257, 332, 'y'], [292, 333, 'y'],
  [244, 468, 'y'], [244, 484, 'y'], [244, 500, 'y'], [315, 361, 'y'], [321, 361, 'y'], [319, 370, 'y'],
  [323, 370, 'y'], [322, 381, 'y'], [326, 384, 'y'], [333, 386, 'y'], [344, 399, 'y'], [350, 399, 'y'],
  [353, 415, 'y'], [358, 417, 'y'], [362, 422, 'y'], [366, 429, 'y'], [372, 436, 'y'], [375, 436, 'y'],
  [506, 237, 'w'], [516, 258, 'w'], [519, 254, 'w'], [527, 251, 'w'], [530, 249, 'w'], [551, 281, 'r'], [551, 297, 'r']
];

function glyph([x, y, kind]) {
  if (kind === 'y') return `<path d="M${x - 2} ${y}l3-3v6z" fill="#fff04a"/><path d="M${x - 1} ${y - 1}h1v2" stroke="#fffde0" fill="none"/>`;
  if (kind === 'r') return `<path d="M${x - 2} ${y}l3-3v6z" fill="#f33" stroke="#ffc8a0" stroke-width=".7"/>`;
  const c = kind === 'b' ? '#1020d8' : '#000';
  return `<path d="M${x - 3} ${y}l3-3 3 3-3 3z" fill="#fff"/><path d="M${x - 2} ${y}h4M${x} ${y - 2}v4" stroke="${c}" stroke-width="1.500"/>`;
}

document.getElementById('chart-a').innerHTML =
  grid(45, 116, 33.36, 15, 13, 568) + '<path class="bid" d="M13 304.5H568"/>' +
  `<path class="bars bars-a" d="${bars(seriesA, 71, 0.42)}M242.5 350V583"/>` +
  line(229, 222, 267, 222, '#1212b8') + line(292, 238, 502, 237.5, '#1212b8') + line(531, 250, 549, 280, '#101080') +
  line(223, 192, 230, 250, '#c33', 1) + line(230, 250, 243, 468, '#e01010', 2, '2 2') +
  line(257, 331, 292, 333, '#c01010') + line(376, 436, 549, 284, '#b01010') +
  '<path d="M223 584l3 2 3-1" stroke="#b01010" fill="none"/>' +
  trades.map(t => `<circle class="halo" cx="${t[0]}" cy="${t[1]}" r="6"/>`).join('') +
  trades.map(glyph).join('') + frame(13, 568, 116, 33.36, 15);

const rings = [[625, 332], [682, 375], [687, 391], [691, 412], [696, 415], [700, 416], [707, 418], [740, 438], [753, 463], [758, 466], [760, 467], [763, 474], [770, 484], [789, 497], [1053, 178], [1081, 212], [1096, 202], [1101, 196], [1141, 273]];
const sells = [[683, 318], [676, 343], [690, 364], [696, 371], [697, 381], [703, 359], [734, 366], [752, 431], [756, 428], [759, 431], [762, 432], [770, 442], [790, 446]];
const buys = [[1077, 285], [1085, 266], [1101, 257], [1103, 257]];
const arrow = ([x, y], s, c) => `<path d="M${x} ${y - 4 * s}V${y + 3 * s}M${x - 3} ${y}L${x} ${y + 3 * s}L${x + 3} ${y}" stroke="${c}" stroke-width="2" fill="none"/>`;

document.getElementById('chart-b').innerHTML =
  grid(656, 139, 33.98, 14, 624, 1179) + '<path class="bid" d="M624 285.500H1179"/>' +
  `<path class="bars bars-b" d="${bars(seriesB, 37, 0.5)}"/>` +
  rings.map(r => `<circle class="ring" cx="${r[0]}" cy="${r[1]}" r="4.500"/>`).join('') +
  sells.map(p => arrow(p, 1, '#ff4a10')).join('') + buys.map(p => arrow(p, -1, '#4169e1')).join('') +
  frame(624, 1179, 139, 33.98, 14);
```
